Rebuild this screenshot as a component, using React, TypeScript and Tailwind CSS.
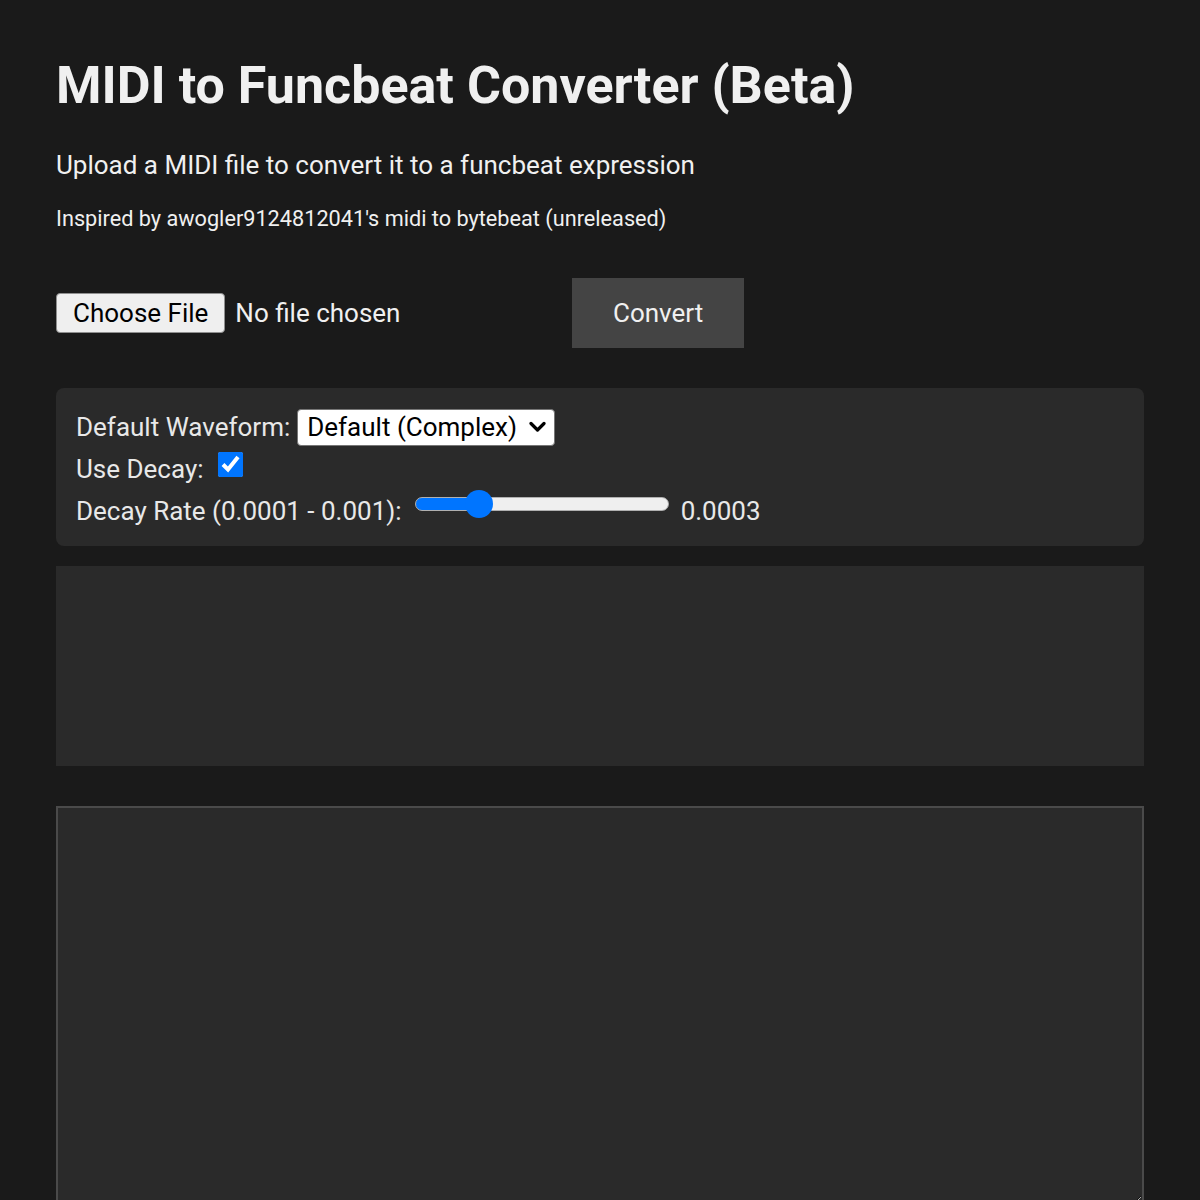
import { useState } from 'react';

const DECAY_MIN = 0.0001;
const DECAY_MAX = 0.001;

export default function App() {
  const [waveform, setWaveform] = useState('default');
  const [useDecay, setUseDecay] = useState(true);
  const [decay, setDecay] = useState(0.0003);

  const pct = ((decay - DECAY_MIN) / (DECAY_MAX - DECAY_MIN)) * 100;

  return (
    <div className="min-h-screen bg-[#1a1a1a] text-[#f0f0f0] font-['Roboto','Liberation_Sans',sans-serif]">
      <div className="px-[56px] pt-[55px]">
        {/* Header */}
        <h1 className="text-[52px] leading-[62px] font-bold">MIDI to Funcbeat Converter (Beta)</h1>
        <p className="mt-[30px] text-[26px] leading-[36px]">
          Upload a MIDI file to convert it to a funcbeat expression
        </p>
        <p className="mt-[21px] text-[21.7px] leading-[30px]">
          Inspired by awogler9124812041's midi to bytebeat (unreleased)
        </p>

        {/* Upload row */}
        <div className="mt-[44px] flex items-center">
          <input
            type="file"
            accept=".mid,.midi"
            className="w-[516px] text-[26px] leading-[30px] text-[#f0f0f0] file:mr-[10px] file:px-[16px] file:py-[4px] file:bg-[#efefef] file:text-black file:border file:border-[#8f8f8f] file:rounded-[4px]"
          />
          <button className="bg-[#444444] px-[41px] py-[20px] text-[26px] leading-[30px] text-[#f0f0f0]">
            Convert
          </button>
        </div>

        {/* Options */}
        <div className="mt-[40px] bg-[#2a2a2a] rounded-[8px] px-[20px] pt-[18px] pb-[14px] text-[26px] leading-[30px] text-[#e8e8e8]">
          <div className="flex items-center h-[42px]">
            <label htmlFor="waveform">Default Waveform:</label>
            <div className="relative ml-[7px]">
              <select
                id="waveform"
                value={waveform}
                onChange={(e) => setWaveform(e.target.value)}
                className="appearance-none h-[37px] w-[258px] bg-white text-black text-[26px] leading-[30px] border border-[#767676] rounded-[4px] pl-[9px] pr-[36px]"
              >
                <option value="default">Default (Complex)</option>
                <option value="sine">Sine</option>
                <option value="square">Square</option>
                <option value="saw">Sawtooth</option>
                <option value="triangle">Triangle</option>
              </select>
              <svg
                className="pointer-events-none absolute right-[9px] top-1/2 -translate-y-1/2"
                width="17"
                height="12"
                viewBox="0 0 17 12"
                fill="none"
              >
                <path d="M2 2.5l6.5 6.5L15 2.5" stroke="#000" strokeWidth="3.2" strokeLinecap="round" strokeLinejoin="round" />
              </svg>
            </div>
          </div>
          <div className="flex items-center h-[42px]">
            <label htmlFor="decay">Use Decay:</label>
            <input
              id="decay"
              type="checkbox"
              checked={useDecay}
              onChange={(e) => setUseDecay(e.target.checked)}
              className="ml-[14px] mb-[9px] w-[25px] h-[25px] accent-[#0075ff]"
            />
          </div>
          <div className="flex items-center h-[42px]">
            <label htmlFor="rate">Decay Rate (0.0001 - 0.001):</label>
            <input
              id="rate"
              type="range"
              min={DECAY_MIN}
              max={DECAY_MAX}
              step={0.0001}
              value={decay}
              onChange={(e) => setDecay(parseFloat(e.target.value))}
              style={{ background: `linear-gradient(to right, #0075ff ${pct}%, #efefef ${pct}%)` }}
              className="ml-[13px] mb-[14px] w-[254px] h-[14px] appearance-none rounded-full border border-[#b0b0b0] [&::-webkit-slider-thumb]:appearance-none [&::-webkit-slider-thumb]:w-[28px] [&::-webkit-slider-thumb]:h-[28px] [&::-webkit-slider-thumb]:rounded-full [&::-webkit-slider-thumb]:bg-[#0075ff]"
            />
            <span className="ml-[12px]">{decay.toFixed(4)}</span>
          </div>
        </div>

        {/* Player area */}
        <div className="mt-[20px] h-[200px] bg-[#2a2a2a]" />

        {/* Output */}
        <textarea
          readOnly
          className="mt-[40px] block w-full h-[400px] bg-[#2a2a2a] border-2 border-[#4a4a4a] text-[#f0f0f0] font-['Liberation_Mono',monospace]"
        />
      </div>
    </div>
  );
}
